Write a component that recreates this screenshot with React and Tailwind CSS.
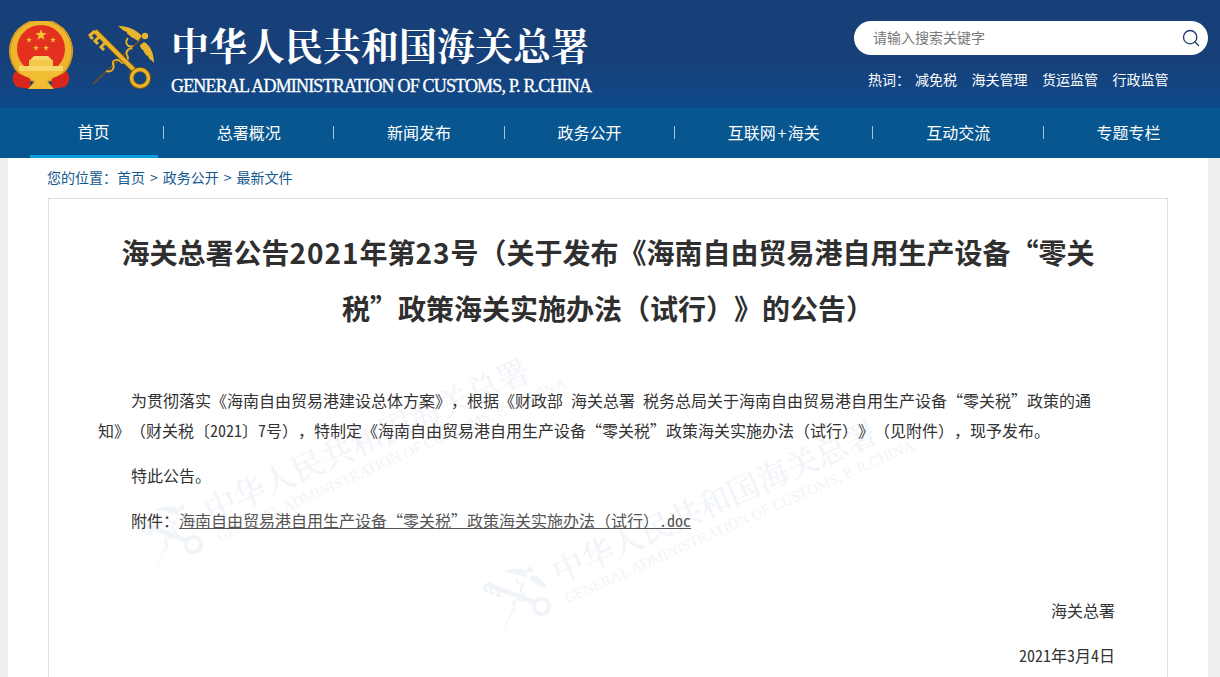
import React from 'react';
import { Search } from 'lucide-react';

const cjk = "font-['Noto_Sans_CJK_SC',sans-serif]";

function Star({ x, y, r, fill = '#f6c632' }) {
  const points = [];
  for (let i = 0; i < 10; i++) {
    const radius = i % 2 === 0 ? r : r * 0.4;
    const angle = -Math.PI / 2 + (i * Math.PI) / 5;
    points.push(`${x + radius * Math.cos(angle)},${y + radius * Math.sin(angle)}`);
  }
  return <polygon points={points.join(' ')} fill={fill} />;
}

function Emblem() {
  return (
    <svg width="66" height="70" viewBox="0 0 66 70">
      <circle cx="33" cy="30" r="32" fill="#eeb62c" />
      <circle cx="33" cy="30" r="31" fill="none" stroke="#c98a17" strokeWidth="1" />
      <circle cx="33" cy="28" r="24" fill="#e4301f" />
      <Star x={33} y={14} r={6} />
      <Star x={21} y={19} r={3} />
      <Star x={45} y={19} r={3} />
      <Star x={28} y={27} r={3} />
      <Star x={38} y={27} r={3} />
      <path d="M26 35 h14 l4 4 h-22 z" fill="#f8d76a" />
      <rect x="21" y="39" width="24" height="6" fill="#f4c84a" />
      <rect x="11" y="45" width="44" height="5" fill="#f8d76a" />
      <path d="M8 50 C14 56 18 54 22 58 L23 68 L9 66 C4 62 3 54 8 50 Z" fill="#d8261c" />
      <path d="M58 50 C52 56 48 54 44 58 L43 68 L57 66 C62 62 63 54 58 50 Z" fill="#d8261c" />
      <path d="M12 50 H54 L48 56 C44 55 41 57 39 60 L46 68 H20 L27 60 C25 57 22 55 18 56 Z" fill="#f1bd33" />
    </svg>
  );
}

function KeyLogo({ color = '#e8b42c', dark = '#7a5410', size = 68 }) {
  return (
    <svg width={size} height={size} viewBox="0 0 68 68" fill="none">
      <path d="M5 59 L53 14" stroke={dark} strokeWidth="1.4" />
      <path d="M18 46 C24 48 27 43 25 39 C24 35 30 33 33 37 C36 40 42 35 39 30 C37 26 42 22 44 24 M40 13 C36 18 40 23 45 21" stroke={color} strokeWidth="1.8" />
      <path d="M7 6 L47 46" stroke={dark} strokeWidth="6" />
      <path d="M7 6 L47 46" stroke={color} strokeWidth="4" />
      <path d="M7 6 L1 11 M12 11 L7 16 L10 19 M18 17 L13 22 L16 25 M2 11 L5 14" stroke={color} strokeWidth="3" />
      <circle cx="52" cy="53" r="8.5" stroke={dark} strokeWidth="5" />
      <circle cx="52" cy="53" r="8.5" stroke={color} strokeWidth="3.4" />
      <path d="M54 11 C46 3 38 1 30 1 C34 4 35 6 39 7 C38 9 42 10 43 12 C46 13 48 15 50 16 Z" fill={color} />
      <path d="M56 17 C62 20 66 28 66 38 C63 34 61 35 60 31 C58 31 56 27 55 25 C53 24 52 22 52 20 Z" fill={color} />
      <circle cx="57" cy="11" r="3.2" fill={color} />
    </svg>
  );
}

// faint logo stamped behind the article
function Watermark({ className }) {
  return (
    <div className={`absolute flex items-center gap-[10px] -rotate-[24deg] origin-left pointer-events-none ${className}`}>
      <KeyLogo color="#f0f4f9" dark="#f4f7fa" size={62} />
      <div>
        <div className="text-[32px] leading-10 whitespace-nowrap text-[#f1f4f9] font-medium font-['Noto_Serif_CJK_SC','Noto_Sans_CJK_SC',serif]">中华人民共和国海关总署</div>
        <div className="text-[15px] leading-5 whitespace-nowrap text-[#f1f4f9] font-['Liberation_Serif',serif]">GENERAL ADMINISTRATION OF CUSTOMS, P. R.CHINA</div>
      </div>
    </div>
  );
}

// half-width latin runs in the body text
function Half({ children }) {
  return <span className="[font-feature-settings:'hwid']">{children}</span>;
}

function App() {
  const navItems = ['总署概况', '新闻发布', '政务公开', '互联网+海关', '互动交流', '专题专栏'];
  const hotWords = ['减免税', '海关管理', '货运监管', '行政监管'];

  return (
    <div className={`h-screen overflow-hidden bg-[#eeeeee] [text-spacing-trim:space-all] ${cjk}`}>
      <header className="h-[108px] bg-gradient-to-b from-[#173f78] via-[#173f78] to-[#0d4a89] flex justify-between">
        <div className="flex items-start pt-[21px] pl-[8px]">
          <Emblem />
          <div className="ml-[14px] mt-[4px]"><KeyLogo /></div>
          <div className="ml-[15px] -mt-[2px] text-white">
            <div className="text-[38px] leading-[50px] font-bold whitespace-nowrap font-['Noto_Serif_CJK_SC','Noto_Sans_CJK_SC',serif]">中华人民共和国海关总署</div>
            <div className="text-[18px] leading-6 mt-[5px] tracking-[-0.82px] whitespace-nowrap [-webkit-text-stroke:0.3px_white] font-['Liberation_Serif',serif]">GENERAL ADMINISTRATION OF CUSTOMS, P. R.CHINA</div>
          </div>
        </div>
        <div className="w-[366px] pt-[21px] pr-[12px]">
          <div className="h-[34px] rounded-full bg-white flex items-center justify-between pl-[19px] pr-[7px]">
            <span className="text-[14px] pb-[1px] text-[#777777]">请输入搜索关键字</span>
            <Search size={20} strokeWidth={1.6} className="text-[#1d3a6b]" />
          </div>
          <div className="flex items-center mt-[14px] ml-[14px] text-[14px] leading-5 text-white">
            <span className="mr-[5px]">热词：</span>
            <div className="flex gap-[14.5px]">
              {hotWords.map((word) => (
                <span key={word}>{word}</span>
              ))}
            </div>
          </div>
        </div>
      </header>

      <nav className="h-[50px] bg-[#07568f] flex text-white text-[16px] pl-[30px]">
        <div className="w-[128px] flex items-center justify-center border-b-[3px] border-[#0d9de3] pb-[1px] pr-[1px]">首页</div>
        <div className="flex items-center pl-[5px] pb-[2px]">
          {navItems.map((item) => (
            <React.Fragment key={item}>
              <span className="w-px h-[13px] bg-[#a9c4d8]" />
              <span className="px-[52.7px]">
                {item === '互联网+海关' ? <>互联网<span className="px-[1.5px]">+</span>海关</> : item}
              </span>
            </React.Fragment>
          ))}
        </div>
      </nav>

      <main className="ml-[8px] w-[1200px] bg-white px-[40px] h-full">
        <div className="h-[40px] flex items-center pb-[1px] -ml-[1px] text-[14px] text-[#11598f]">
          您的位置：首页<span className="px-[5px]">&gt;</span>政务公开<span className="px-[5px]">&gt;</span>最新文件
        </div>
        <article className="relative overflow-hidden border border-[#dddddd] px-[49px] h-[600px]">
          <Watermark className="left-[94px] top-[318px]" />
          <Watermark className="left-[442px] top-[380px]" />
          <div className="relative">
            <h1 className="pt-[25px] text-center text-[28px] leading-[56px] font-bold text-[#2f2f2f]">
              海关总署公告<span className="tracking-[1px]">2021</span>年第<span className="tracking-[1px]">23</span>号（关于发布《海南自由贸易港自用生产设备“零关<br />税”政策海关实施办法（试行）》的公告）
            </h1>
            <div className="mt-[49px] text-[16px] leading-[30px] text-[#333333]">
              <p className="indent-[33px]">为贯彻落实《海南自由贸易港建设总体方案》，根据《财政部<Half> </Half>海关总署<Half> </Half>税务总局关于海南自由贸易港自用生产设备“零关税”政策的通知》（财关税〔<Half>2021</Half>〕<Half>7</Half>号），特制定《海南自由贸易港自用生产设备“零关税”政策海关实施办法（试行）》（见附件），现予发布。</p>
              <p className="indent-[33px] mt-[15px]">特此公告。</p>
              <p className="indent-[33px] mt-[15px]">
                附件：<span className="underline text-[#555555]">海南自由贸易港自用生产设备“零关税”政策海关实施办法（试行）<Half>.doc</Half></span>
              </p>
              <p className="mt-[60px] text-right pr-[3px]">海关总署</p>
              <p className="mt-[15px] text-right pr-[3px]"><Half>2021</Half>年<Half>3</Half>月<Half>4</Half>日</p>
            </div>
          </div>
        </article>
      </main>
    </div>
  );
}

export default App;
